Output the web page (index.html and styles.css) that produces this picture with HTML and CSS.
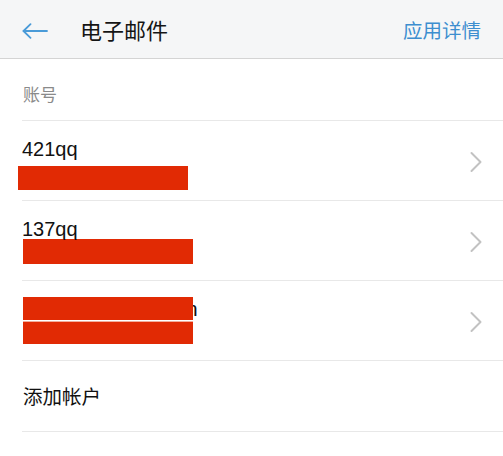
FILE: index.html
```html
<!DOCTYPE html>
<html lang="zh-CN">
<head>
<meta charset="utf-8">
<title>电子邮件</title>
<link rel="stylesheet" href="styles.css">
</head>
<body>
<header class="appbar">
  <div class="appbar-left">
    <svg class="back" width="26" height="16" viewBox="0 0 26 16" aria-hidden="true">
      <polyline points="8.5,1.2 1.5,8 8.5,14.8" fill="none" stroke="#4a9bd8" stroke-width="1.8" stroke-linecap="round" stroke-linejoin="round"/>
      <line x1="1.6" y1="8" x2="25" y2="8" stroke="#4a9bd8" stroke-width="1.8" stroke-linecap="round"/>
    </svg>
    <h1 class="title">电子邮件</h1>
  </div>
  <a class="action">应用详情</a>
</header>

<main>
  <div class="section-label">账号</div>
  <ul class="list">
    <li class="row">
      <div class="content c1">
        <div class="name">421qq</div>
        <div class="bar bar1"></div>
      </div>
      <svg class="chev" width="14" height="22" viewBox="0 0 14 22" aria-hidden="true"><polyline points="2.5,2 11.5,11 2.5,20" fill="none" stroke="#c2c2c2" stroke-width="2" stroke-linecap="round" stroke-linejoin="round"/></svg>
    </li>
    <li class="row">
      <div class="content c2">
        <div class="name">137qq</div>
        <div class="bar bar2"></div>
      </div>
      <svg class="chev" width="14" height="22" viewBox="0 0 14 22" aria-hidden="true"><polyline points="2.5,2 11.5,11 2.5,20" fill="none" stroke="#c2c2c2" stroke-width="2" stroke-linecap="round" stroke-linejoin="round"/></svg>
    </li>
    <li class="row">
      <div class="content c3">
        <div class="line3">
          <div class="bar bar3a"></div><span class="tail">n</span>
        </div>
        <div class="bar bar3b"></div>
      </div>
      <svg class="chev" width="14" height="22" viewBox="0 0 14 22" aria-hidden="true"><polyline points="2.5,2 11.5,11 2.5,20" fill="none" stroke="#c2c2c2" stroke-width="2" stroke-linecap="round" stroke-linejoin="round"/></svg>
    </li>
    <li class="row add">
      <span class="add-text">添加帐户</span>
    </li>
  </ul>
</main>
</body>
</html>
```

FILE: styles.css
```css
* { box-sizing: border-box; }

html, body {
  margin: 0;
  padding: 0;
  background: #ffffff;
}

body {
  width: 503px;
  height: 456px;
  overflow: hidden;
  font-family: "Liberation Sans", "Noto Sans CJK SC", sans-serif;
  color: #111111;
}

.appbar {
  height: 59px;
  background: #f5f6f7;
  border-bottom: 1px solid #d4d4d4;
  display: flex;
  align-items: center;
  justify-content: space-between;
  padding: 0 22px 0 22px;
}

.appbar-left {
  display: flex;
  align-items: center;
}

.back {
  display: block;
  margin-top: 3px;
}

.title {
  margin: 0 0 0 32px;
  font-family: "Noto Sans CJK SC", sans-serif;
  font-weight: 400;
  font-size: 22px;
  line-height: 30px;
  color: #151515;
}

.action {
  font-family: "Noto Sans CJK SC", sans-serif;
  font-size: 19.5px;
  line-height: 30px;
  color: #3d8ecf;
  text-decoration: none;
  margin-top: 1px;
}

.section-label {
  height: 61px;
  padding: 23px 0 0 23px;
  font-family: "Noto Sans CJK SC", sans-serif;
  font-size: 17px;
  line-height: 24px;
  color: #8a8a8a;
}

.list {
  list-style: none;
  margin: 0;
  padding: 0;
}

.row {
  height: 80px;
  margin-left: 22px;
  padding-right: 20px;
  border-top: 1px solid #e8e8e8;
  display: flex;
  align-items: center;
  justify-content: space-between;
}

.content {
  align-self: flex-start;
  padding-top: 16px;
}

.name {
  font-size: 20px;
  line-height: 24px;
  color: #111111;
}

.bar {
  background: #e12a04;
  width: 170px;
}

.bar1 {
  height: 24px;
  margin-top: 5px;
  margin-left: -4px;
}

.bar2 {
  height: 25px;
  margin-top: -2px;
  margin-left: 1px;
}

.line3 {
  display: flex;
  align-items: flex-start;
  margin-left: 1px;
}

/* redaction sits over the address text */
.bar3a {
  height: 23px;
  position: relative;
  z-index: 1;
}

.tail {
  font-size: 21px;
  line-height: 24px;
  margin-top: 0;
  margin-left: -7px;
  color: #111111;
}

.bar3b {
  height: 23px;
  margin-left: 1px;
  border-top: 1px solid #f2ad9c;
}

.chev {
  display: block;
  margin-top: 2px;
}

.add {
  height: 72px;
  border-bottom: 1px solid #e8e8e8;
}

.add-text {
  margin-left: 1px;
  font-family: "Noto Sans CJK SC", sans-serif;
  font-size: 19.5px;
  line-height: 26px;
  color: #111111;
}
```
